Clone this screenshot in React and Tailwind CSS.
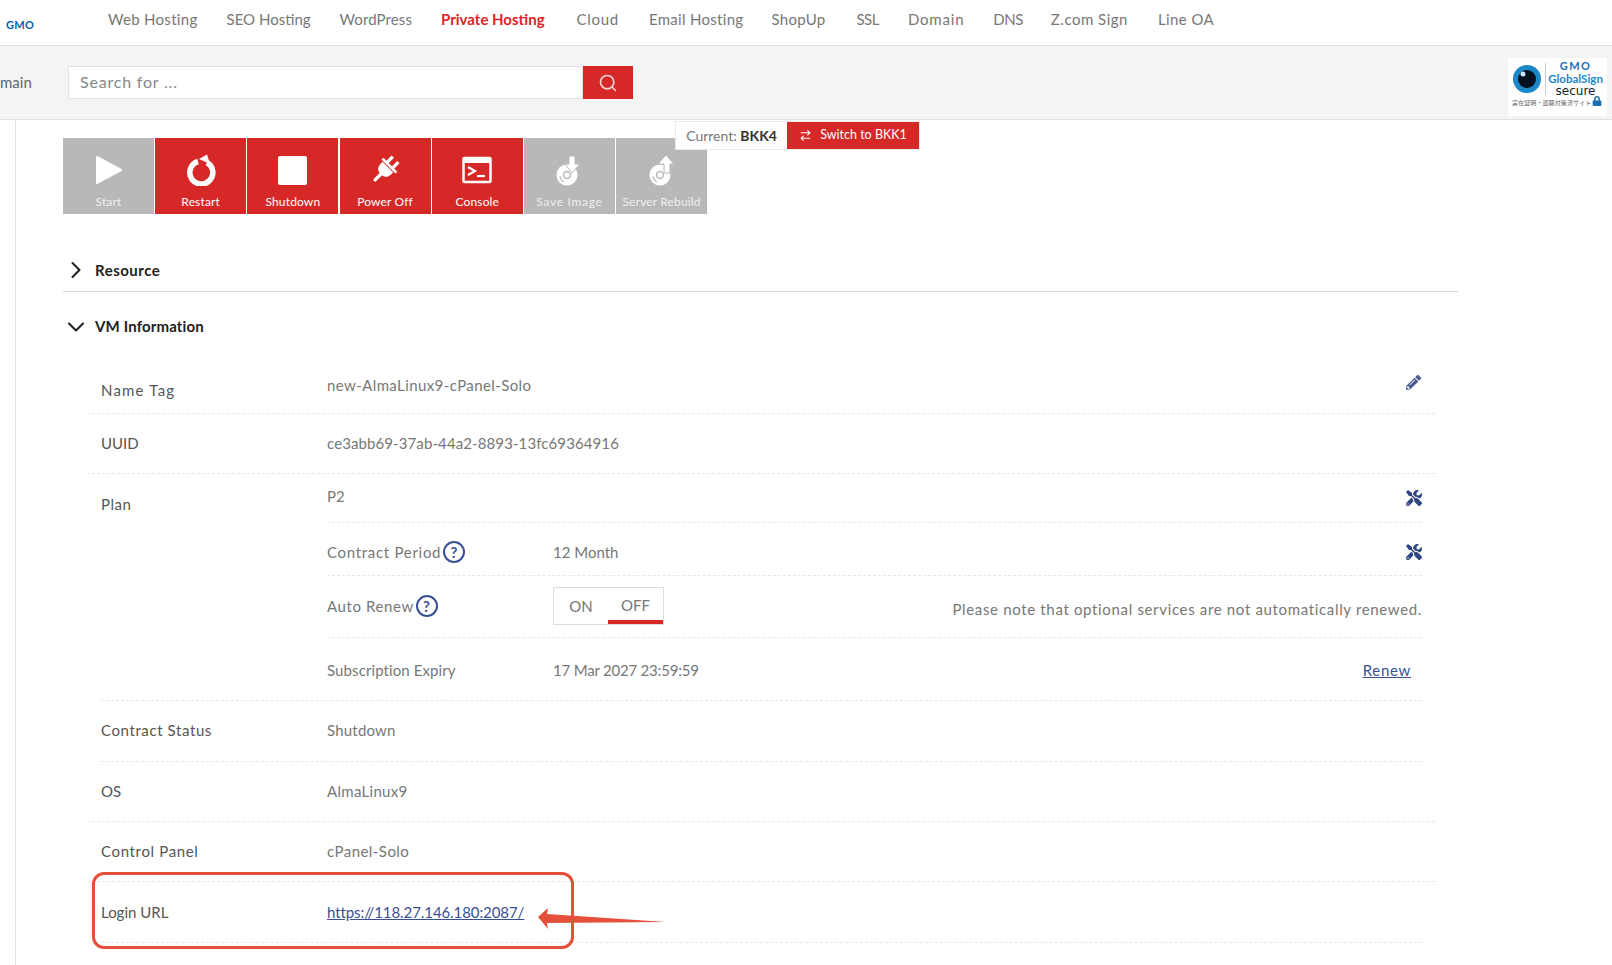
import { Search, ChevronRight, ChevronDown, ArrowRightLeft } from "lucide-react";
import { FaPencilAlt, FaTools, FaLock } from "react-icons/fa";

const navItems = [
  { label: "Web Hosting" },
  { label: "SEO Hosting", cls: "tracking-[0px]" },
  { label: "WordPress", cls: "tracking-[0.1px]" },
  { label: "Private Hosting", cls: "text-[#e1222a] font-bold tracking-[0px]" },
  { label: "Cloud", cls: "tracking-[0.7px] ml-[3px]" },
  { label: "Email Hosting", cls: "tracking-[0.3px] ml-[1px]" },
  { label: "ShopUp", cls: "tracking-[0.3px] ml-[-1px]" },
  { label: "SSL", cls: "tracking-[-0.5px] ml-[2px]" },
  { label: "Domain", cls: "tracking-[0.8px]" },
  { label: "DNS", cls: "tracking-[-0.5px]" },
  { label: "Z.com Sign", cls: "tracking-[0.5px] ml-[-1px]" },
  { label: "Line OA", cls: "tracking-[0.4px] ml-[1px]" },
];

function PlayIcon() {
  return (
    <svg width="28" height="30" viewBox="0 0 28 30"><path d="M2 2 L26 15 L2 28 Z" fill="#fff" stroke="#fff" strokeWidth="2" strokeLinejoin="round" /></svg>
  );
}

function RestartIcon() {
  return (
    <svg width="30" height="32" viewBox="0 0 30 32">
      <path d="M12 7.5 A11.5 11.5 0 1 0 21 8.5" fill="none" stroke="#fff" strokeWidth="5.5" />
      <path d="M13 5 L21 0.5 L24 10 Z" fill="#fff" />
    </svg>
  );
}

function StopIcon() {
  return <div className="w-[29px] h-[29px] bg-white rounded-[2px]" />;
}

function PlugIcon() {
  return (
    <svg width="30" height="30" viewBox="0 0 30 30">
      <g transform="rotate(45 15 15)">
        <rect x="9.5" y="0" width="3.2" height="9" fill="#fff" />
        <rect x="17.3" y="0" width="3.2" height="9" fill="#fff" />
        <rect x="5" y="7.5" width="20" height="2.6" rx="1" fill="#fff" />
        <path d="M7.5 11 L22.5 11 L22.5 14 Q22.5 21 15 21 Q7.5 21 7.5 14 Z" fill="#fff" />
        <path d="M15 20 L15 29" stroke="#fff" strokeWidth="3.4" strokeLinecap="round" />
      </g>
    </svg>
  );
}

function ConsoleIcon() {
  return (
    <svg width="30" height="28" viewBox="0 0 30 28">
      <rect x="1.5" y="2" width="27" height="24" rx="1" fill="none" stroke="#fff" strokeWidth="2.5" />
      <rect x="1.5" y="2" width="27" height="5" fill="#fff" />
      <path d="M6 11 L13 15 L6 19" fill="none" stroke="#fff" strokeWidth="2.2" />
      <path d="M15 20 L23 20" stroke="#fff" strokeWidth="2.2" />
    </svg>
  );
}

function DiscIcon({ up }) {
  return (
    <svg width="26" height="34" viewBox="0 0 26 34">
      <circle cx="11" cy="22" r="10.5" fill="#fff" />
      <circle cx="11" cy="22" r="3.4" fill="none" stroke="#b8b8b8" strokeWidth="1.5" />
      <path d="M4 23 A7.5 7.5 0 0 0 8 29" fill="none" stroke="#b8b8b8" strokeWidth="1.2" />
      {up ? (
        <path d="M17 2 L25 11 L21 11 L21 20 L15 20 L15 11 L9 11 Z" fill="#fff" stroke="#b8b8b8" strokeWidth="1" />
      ) : (
        <path d="M13 3 L19 3 L19 11 L24 11 L16 20 L9 11 L13 11 Z" fill="#fff" stroke="#b8b8b8" strokeWidth="1" />
      )}
    </svg>
  );
}

const actions = [
  { label: "Start", icon: <PlayIcon />, on: false },
  { label: "Restart", icon: <RestartIcon />, on: true },
  { label: "Shutdown", icon: <StopIcon />, on: true },
  { label: "Power Off", icon: <PlugIcon />, on: true },
  { label: "Console", icon: <ConsoleIcon />, on: true },
  { label: "Save Image", icon: <DiscIcon />, on: false, cls: "tracking-[0.7px]" },
  { label: "Server Rebuild", icon: <DiscIcon up />, on: false },
];

function HelpIcon() {
  return (
    <span className="w-[22px] h-[22px] rounded-full border-2 border-[#3a5095] text-[#3a5095] text-[15px] font-bold flex items-center justify-center ml-[2px]">?</span>
  );
}

function Row({ label, value, right, short, labelClass = "", valueClass = "", className = "" }) {
  return (
    <div className={`flex items-center border-b border-dashed border-[#e6e6e6] ${short ? "ml-[14px] mr-[13px]" : ""} ${className}`}>
      <div className={`text-[#555] ${short ? "w-[226px]" : "w-[240px] pl-[14px]"} ${labelClass}`}>{label}</div>
      <div className={`flex-1 text-[#777] ${valueClass}`}>{value}</div>
      {right}
    </div>
  );
}

function SecureBadge() {
  return (
    <div className="ml-auto mr-[5px] mt-[9px] w-[99px] h-[58px] bg-white flex flex-col pl-[4px] pt-[1px]">
      <div className="flex h-[39px]">
        <svg className="mt-[5px] shrink-0" width="30" height="30" viewBox="0 0 30 30">
          <circle cx="15" cy="15" r="14" fill="#1b87c9" />
          <circle cx="15" cy="15" r="9" fill="#04121f" />
          <circle cx="11" cy="10" r="2.5" fill="#cfe8f8" />
        </svg>
        <div className="ml-[3px] mt-[4px] w-px h-[32px] bg-[#ccc]" />
        <div className="ml-[2px] w-[55px] flex flex-col items-center">
          <span className="text-[#1b6fb8] text-[11px] font-bold leading-[13px] tracking-[1.4px]">GMO</span>
          <span className="text-[#1b87c9] text-[11.5px] font-bold leading-[13px] whitespace-nowrap">GlobalSign</span>
          <span className="text-[#222] text-[12px] leading-[13px] font-['DejaVu_Sans',sans-serif]">secure</span>
        </div>
      </div>
      <div className="flex items-center whitespace-nowrap">
        <span className="text-[#666] text-[6px] leading-[9px] font-['Noto_Sans_CJK_JP',sans-serif] tracking-[0.1px]">実在証明・盗聴対策済サイト</span>
        <FaLock className="text-[#1b6fb8] ml-[1px] mt-[-3px]" size={10} />
      </div>
    </div>
  );
}

function App() {
  return (
    <div className="relative w-[1612px] h-[965px] overflow-hidden bg-white text-[15px] font-['Lato',sans-serif]">
      <header className="h-[46px] border-b border-[#e2e2e2] flex items-center">
        <span className="w-[108px] pl-[6px] text-[#0a5fa8] text-[11px] font-bold pt-[5px] tracking-[0.3px]">GMO</span>
        <nav className="flex gap-[29px] text-[#777] pb-[6px]">
          {navItems.map((item) => (
            <a key={item.label} className={item.cls || "tracking-[0.3px]"}>{item.label}</a>
          ))}
        </nav>
      </header>

      <div className="h-[74px] bg-[#f4f4f4] border-b border-[#e2e2e2] flex items-center">
        <span className="w-[68px] text-[#666]">main</span>
        <div className="w-[515px] h-[33px] bg-white border border-[#e2e2e2] flex items-center px-[11px] pb-[1px] text-[#888] text-[16px] tracking-[0.8px]">Search for ...</div>
        <button className="w-[50px] h-[33px] bg-[#d62826] flex items-center justify-center"><Search size={20} color="#f0d0d0" /></button>
        <SecureBadge />
      </div>

      <div className="absolute left-[15px] top-[120px] bottom-0 border-l border-[#e2e2e2]" />

      <div className="absolute left-[675px] top-[121px] h-[29px] flex bg-white border border-[#eaeaea] z-10 text-[14px]">
        <div className="w-[111px] flex items-center justify-center text-[#777]">Current:&nbsp;<b className="text-[#333]">BKK4</b></div>
        <div className="w-[132px] bg-[#d62826] text-white flex items-center justify-center gap-[8px] text-[12.5px]"><ArrowRightLeft size={13} />Switch to BKK1</div>
      </div>

      <main className="pl-[63px] pr-[154px]">
        <div className="flex gap-[1.2px] pt-[18px]">
          {actions.map((a) => (
            <div key={a.label} className={`w-[91px] h-[76px] flex flex-col items-center pt-[14px] text-[12px] ${a.on ? "bg-[#d62826] text-white" : "bg-[#b8b8b8] text-[#eee]"} ${a.cls || "tracking-[0.15px]"}`}>
              <div className="h-[36px] flex items-center justify-center">{a.icon}</div>
              <span className="mt-[5px] whitespace-nowrap">{a.label}</span>
            </div>
          ))}
        </div>

        <div className="h-[78px] border-b border-[#d8d8d8] flex items-center gap-[5px] pt-[35px] font-bold text-[#222] tracking-[0.5px]">
          <ChevronRight className="ml-[-1px]" size={28} strokeWidth={1.8} />Resource
        </div>
        <div className="h-[53px] flex items-center gap-[5px] pt-[16px] font-bold text-[#222] tracking-[0.15px]">
          <ChevronDown className="ml-[-1px]" size={28} strokeWidth={1.8} />VM Information
        </div>

        <div className="ml-[24px] mr-[23px] mt-[14px]">
          <Row label="Name Tag" value="new-AlmaLinux9-cPanel-Solo" className="h-[55px] pb-[1px]" labelClass="pt-[10px] tracking-[1.2px]" valueClass="tracking-[0.4px]"
            right={<FaPencilAlt className="text-[#4a5a8f] mr-[14px] mb-[6px]" size={15} />} />
          <Row label="UUID" value="ce3abb69-37ab-44a2-8893-13fc69364916" className="h-[60px]" valueClass="tracking-[0.1px]" />

          <div className="flex ml-[14px] mr-[13px] border-b border-dashed border-[#e6e6e6]">
            <div className="w-[226px] pt-[19px] text-[#555] tracking-[0.5px]">Plan</div>
            <div className="flex-1 text-[#777]">
              <div className="h-[49px] flex items-center justify-between border-b border-dashed border-[#e6e6e6]">
                <span className="pb-[3px]">P2</span>
                <FaTools className="text-[#2f4580]" size={16} />
              </div>
              <div className="h-[53px] flex items-center border-b border-dashed border-[#e6e6e6] pt-[6px]">
                <div className="w-[226px] flex items-center tracking-[0.7px]">Contract Period<HelpIcon /></div>
                12 Month
                <FaTools className="text-[#2f4580] ml-auto" size={16} />
              </div>
              <div className="h-[62px] flex items-center border-b border-dashed border-[#e6e6e6] pb-[1px]">
                <div className="w-[226px] flex items-center tracking-[0.6px]">Auto Renew<HelpIcon /></div>
                <div className="w-[111px] h-[38px] border border-[#ddd] flex">
                  <span className="w-[54px] flex items-center justify-center">ON</span>
                  <span className="flex-1 flex items-center justify-center border-b-[4px] border-[#d62826] pt-[3px]">OFF</span>
                </div>
                <span className="ml-auto pt-[7px] tracking-[0.66px]">Please note that optional services are not automatically renewed.</span>
              </div>
              <div className="h-[62px] flex items-center pt-[2px]">
                <div className="w-[226px] tracking-[0.1px]">Subscription Expiry</div>
                <span className="tracking-[-0.2px]">17 Mar 2027 23:59:59</span>
                <a className="ml-auto mr-[11px] text-[#3a5095] underline tracking-[0.7px]">Renew</a>
              </div>
            </div>
          </div>

          <Row short label="Contract Status" value="Shutdown" className="h-[61px] pb-[1px]" labelClass="tracking-[0.6px]" valueClass="tracking-[0.2px]" />
          <Row label="OS" value="AlmaLinux9" className="h-[60px]" valueClass="tracking-[0.3px]" />
          <Row label="Control Panel" value="cPanel-Solo" className="h-[60px]" labelClass="tracking-[0.65px]" valueClass="tracking-[0.45px]" />
          <Row short label="Login URL" value={<a className="text-[#3a5095] underline tracking-[-0.08px]">https://118.27.146.180:2087/</a>} className="h-[61px]" />
        </div>
      </main>

      <div className="absolute left-[92px] top-[872px] w-[482px] h-[77px] border-[3px] border-[#e5503a] rounded-[12px]" />
      <svg className="absolute left-[536px] top-[905px]" width="134" height="26" viewBox="0 0 134 26">
        <path d="M2 12 L12 3 L11 9 L130 17 L11 18 L12 24 Z" fill="#e5503a" />
      </svg>
    </div>
  );
}

export default App;
